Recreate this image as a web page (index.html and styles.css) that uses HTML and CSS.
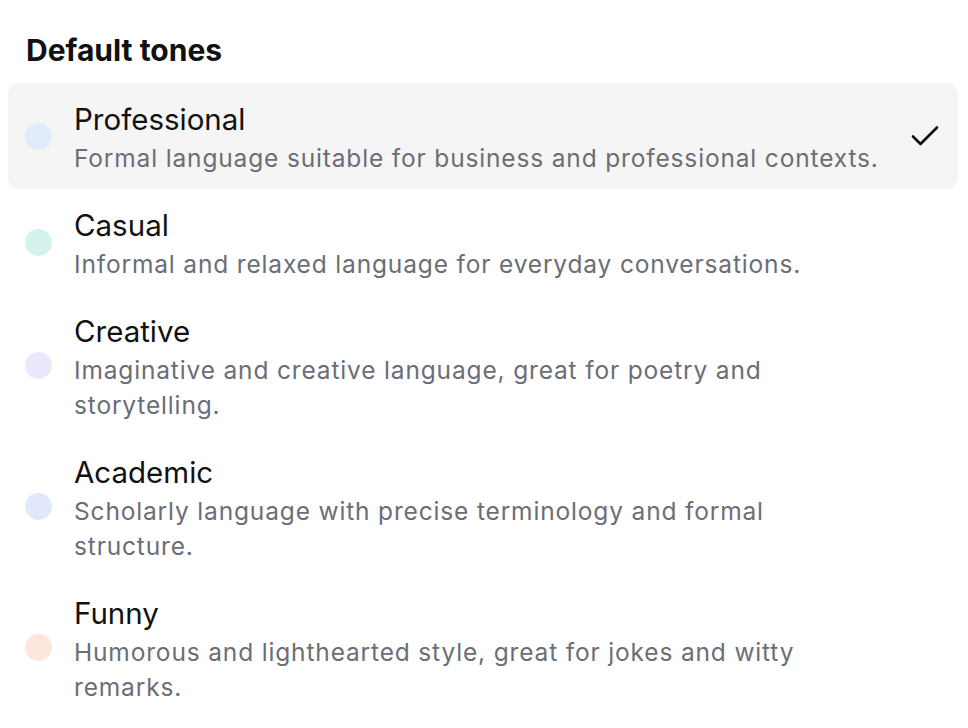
FILE: index.html
```html
<!DOCTYPE html>
<html lang="en">
<head>
  <meta charset="UTF-8">
  <meta name="viewport" content="width=device-width, initial-scale=1.0">
  <title>Default tones</title>
  <link rel="stylesheet" href="styles.css">
</head>
<body>
  <div class="panel">
    <h2 class="panel-title">Default tones</h2>
    <ul class="tones">
      <li class="tone selected">
        <span class="dot dot-blue"></span>
        <div class="tone-text">
          <div class="tone-name">Professional</div>
          <div class="tone-desc">Formal language suitable for business and professional contexts.</div>
        </div>
        <svg class="check" width="28" height="22" viewBox="0 0 28 22" fill="none">
          <path d="M2 11.5 L9.5 19 L26 2.5" stroke="#111" stroke-width="2.6" stroke-linecap="round" stroke-linejoin="round"/>
        </svg>
      </li>
      <li class="tone">
        <span class="dot dot-teal"></span>
        <div class="tone-text">
          <div class="tone-name">Casual</div>
          <div class="tone-desc">Informal and relaxed language for everyday conversations.</div>
        </div>
      </li>
      <li class="tone">
        <span class="dot dot-lavender"></span>
        <div class="tone-text">
          <div class="tone-name">Creative</div>
          <div class="tone-desc">Imaginative and creative language, great for poetry and storytelling.</div>
        </div>
      </li>
      <li class="tone">
        <span class="dot dot-indigo"></span>
        <div class="tone-text">
          <div class="tone-name">Academic</div>
          <div class="tone-desc">Scholarly language with precise terminology and formal structure.</div>
        </div>
      </li>
      <li class="tone">
        <span class="dot dot-peach"></span>
        <div class="tone-text">
          <div class="tone-name">Funny</div>
          <div class="tone-desc">Humorous and lighthearted style, great for jokes and witty remarks.</div>
        </div>
      </li>
    </ul>
  </div>
</body>
</html>
```

FILE: styles.css
```css
* {
  margin: 0;
  padding: 0;
  box-sizing: border-box;
}

body {
  background: #fff;
  font-family: 'Inter', 'Noto Sans', sans-serif;
  color: #111;
}

.panel {
  width: 950px;
  margin-left: 8px;
  padding-top: 32px;
}

.panel-title {
  font-size: 30px;
  font-weight: 700;
  line-height: 36px;
  padding-left: 18px;
  margin-bottom: 15px;
  color: #111;
}

.tones {
  list-style: none;
}

.tone {
  display: flex;
  align-items: center;
  padding: 13.5px 19px 13.5px 17px;
  border-radius: 10px;
}

.tone.selected {
  background: #f5f5f6;
}

.dot {
  flex: none;
  width: 27px;
  height: 27px;
  border-radius: 50%;
  margin-right: 22px;
}

.dot-blue { background: #e0ecfb; }
.dot-teal { background: #d4f3ee; }
.dot-lavender { background: #ebe8fc; }
.dot-indigo { background: #e1e8fb; }
.dot-peach { background: #fde7da; }

.tone-text {
  flex: 1;
  max-width: 812px;
}

.tone-name {
  font-size: 29.5px;
  line-height: 44px;
  color: #111;
}

.tone-desc {
  font-size: 24.5px;
  line-height: 35px;
  letter-spacing: 0.84px;
  color: #6b6e76;
}

.check {
  flex: none;
  margin-left: auto;
}
```
